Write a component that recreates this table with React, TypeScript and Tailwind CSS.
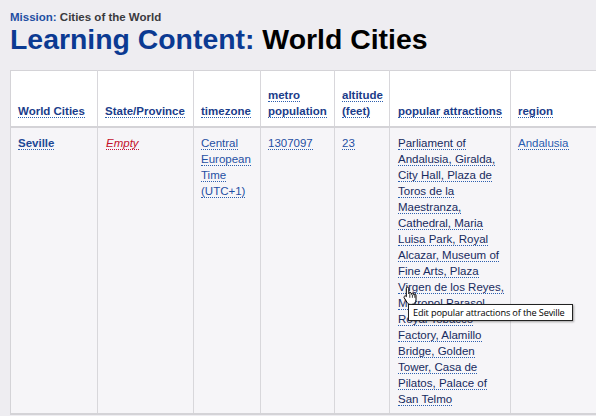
import React from "react";

const link = "border-b border-dotted border-[#2d5fae]";

const attractions = [
  "Parliament of",
  "Andalusia, Giralda,",
  "City Hall, Plaza de",
  "Toros de la",
  "Maestranza,",
  "Cathedral, Maria",
  "Luisa Park, Royal",
  "Alcazar, Museum of",
  "Fine Arts, Plaza",
  "Virgen de los Reyes,",
  "Metropol Parasol,",
  "Royal Tobacco",
  "Factory, Alamillo",
  "Bridge, Golden",
  "Tower, Casa de",
  "Pilatos, Palace of",
  "San Telmo",
];

function Lines({ lines, cls }: { lines: string[]; cls: string }) {
  return (
    <div>
      {lines.map((l, i) => (
        <div key={i} className="whitespace-nowrap">
          <span className={`${link} ${cls}`}>{l}</span>
        </div>
      ))}
    </div>
  );
}

export default function App() {
  const th = "align-bottom text-left font-bold text-[#1a3c8a] pl-[7px] pr-[4px] pb-[7px] border-r border-[#d8d7db]";
  const td = "align-top text-left pl-[7px] pr-[4px] pt-[7px] pb-[6px] border-r border-[#d8d7db]";
  return (
    <div
      className="relative w-[596px] h-[416px] overflow-hidden bg-[#eeedf1]"
      style={{ fontFamily: '"Liberation Sans", Arial, sans-serif' }}
    >
      <div className="pl-[10px] pt-[10px]">
        <div className="text-[11.5px] font-bold leading-[14px]">
          <span className="text-[#1f4fa3]">Mission:</span>{" "}
          <span className="text-[#3a3a3e]">Cities of the World</span>
        </div>
        <div className="text-[28.4px] font-bold leading-[30px]">
          <span className="text-[#0b3a92]">Learning Content:</span>{" "}
          <span className="text-black">World Cities</span>
        </div>
      </div>
      <div className="pl-[10px] pt-[16px]">
        <table className="table-fixed border-collapse w-[600px] text-[11.5px] leading-[16px] border-l border-t border-b-2 border-[#d4d3d7]">
          <colgroup>
            <col className="w-[87px]" />
            <col className="w-[96px]" />
            <col className="w-[67px]" />
            <col className="w-[74px]" />
            <col className="w-[55px]" />
            <col className="w-[121px]" />
            <col className="w-[100px]" />
          </colgroup>
          <thead>
            <tr className="bg-white h-[56px] border-b-2 border-[#d4d3d7]">
              <th className={th}><span className={link}>World Cities</span></th>
              <th className={th}><span className={link}>State/Province</span></th>
              <th className={th}><span className={link}>timezone</span></th>
              <th className={th}>
                <span className={link}>metro</span>
                <br />
                <span className={link}>population</span>
              </th>
              <th className={th}>
                <span className={link}>altitude</span>
                <br />
                <span className={link}>(feet)</span>
              </th>
              <th className={`${th} pl-[8px]`}><span className={link}>popular attractions</span></th>
              <th className={th}><span className={link}>region</span></th>
            </tr>
          </thead>
          <tbody>
            <tr className="bg-[#f6f5f8]">
              <td className={td}>
                <span className={`${link} font-bold text-[#1c4795]`}>Seville</span>
              </td>
              <td className={`${td} pl-[8px]`}>
                <span className={`${link} border-[#c0163a] italic text-[#c4102c]`}>Empty</span>
              </td>
              <td className={td}>
                <Lines lines={["Central", "European", "Time", "(UTC+1)"]} cls="text-[#1f4fa3]" />
              </td>
              <td className={td}>
                <span className={`${link} text-[#1f4fa3]`}>1307097</span>
              </td>
              <td className={td}>
                <span className={`${link} text-[#1f4fa3]`}>23</span>
              </td>
              <td className={`${td} pl-[8px]`}>
                <Lines lines={attractions} cls="text-[#172a5e]" />
              </td>
              <td className={td}>
                <span className={`${link} text-[#2a5cb0]`}>Andalusia</span>
              </td>
            </tr>
          </tbody>
        </table>
      </div>

      {/* tooltip */}
      <div
        className="absolute left-[408px] top-[304px] w-[165px] h-[17px] bg-white border border-[#222] shadow-[1px_1px_2px_rgba(0,0,0,0.35)] pl-[4px] text-[9.2px] tracking-[-0.15px] leading-[15px] text-black whitespace-nowrap overflow-hidden"
        style={{ fontFamily: '"Open Sans", "Noto Sans", sans-serif' }}
      >
        Edit popular attractions of the Seville
      </div>

      {/* hand cursor */}
      <svg className="absolute left-[403px] top-[286px]" width="15" height="19" viewBox="0 0 15 19">
        <path
          d="M4.5 1.2c.8 0 1.3.6 1.3 1.4v5.2c0-.8.6-1.3 1.3-1.3s1.3.5 1.3 1.3v.6c0-.8.6-1.2 1.2-1.2.7 0 1.2.5 1.2 1.2v.7c0-.6.5-1.1 1.1-1.1s1.1.5 1.1 1.2v4.6c0 2.4-1.6 4.6-4.3 4.6H7.4c-1.5 0-2.4-.7-3.2-1.8L1.3 12c-.5-.7-.3-1.5.3-1.9.6-.4 1.3-.2 1.8.4l-.2-.1.1.1V2.6c0-.8.5-1.4 1.2-1.4z"
          fill="#fff"
          stroke="#000"
          strokeWidth="1"
          strokeLinejoin="round"
        />
        <path d="M6.8 8.2v3.6M9.4 8.6v3.2M11.8 9v2.8" stroke="#000" strokeWidth="0.8" />
      </svg>
    </div>
  );
}
